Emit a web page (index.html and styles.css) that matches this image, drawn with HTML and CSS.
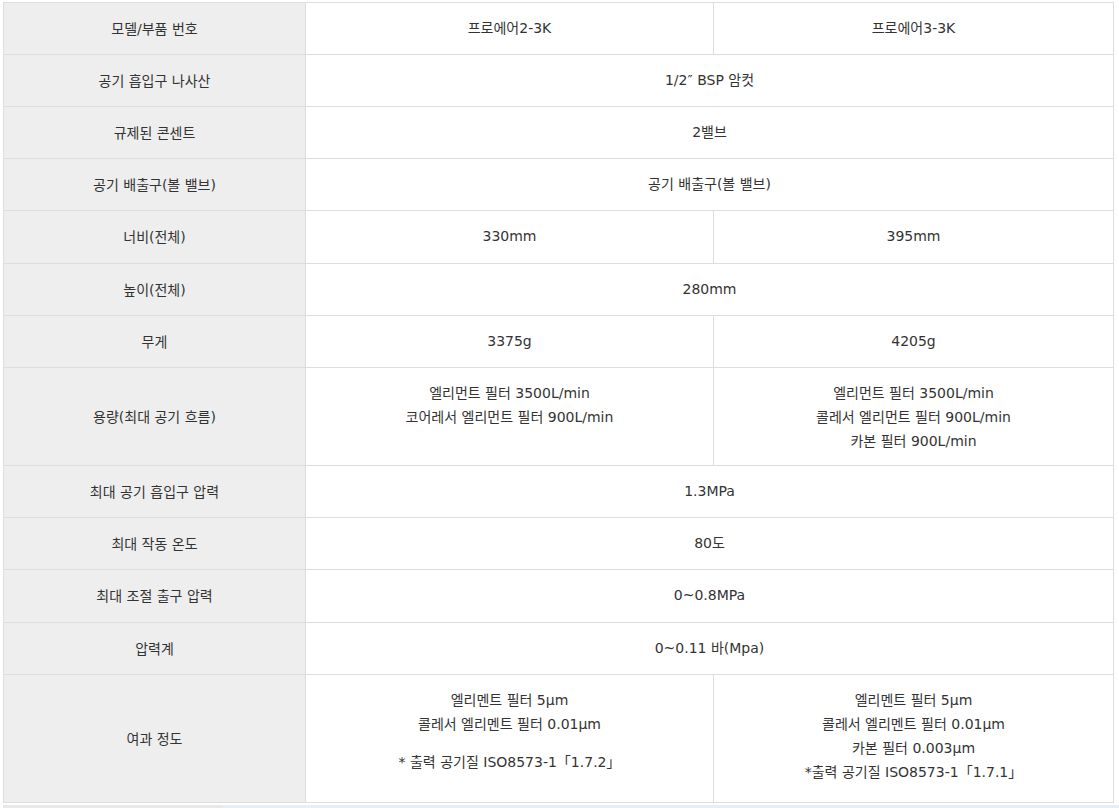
FILE: index.html
```html
<!DOCTYPE html>
<html lang="ko">
<head>
<meta charset="utf-8">
<title>사양</title>
<link rel="stylesheet" href="styles.css">
</head>
<body>
<table class="spec">
  <colgroup>
    <col class="c-label">
    <col class="c-a">
    <col class="c-b">
  </colgroup>
  <tbody>
    <tr><th>모델/부품 번호</th><td>프로에어2-3K</td><td>프로에어3-3K</td></tr>
    <tr><th>공기 흡입구 나사산</th><td colspan="2">1/2″ BSP 암컷</td></tr>
    <tr><th>규제된 콘센트</th><td colspan="2">2밸브</td></tr>
    <tr><th>공기 배출구(볼 밸브)</th><td colspan="2">공기 배출구(볼 밸브)</td></tr>
    <tr class="r-tall"><th>너비(전체)</th><td>330mm</td><td>395mm</td></tr>
    <tr><th>높이(전체)</th><td colspan="2">280mm</td></tr>
    <tr><th>무게</th><td>3375g</td><td>4205g</td></tr>
    <tr class="r-cap"><th>용량(최대 공기 흐름)</th><td>엘리먼트 필터 3500L/min<br>코어레서 엘리먼트 필터 900L/min</td><td>엘리먼트 필터 3500L/min<br>콜레서 엘리먼트 필터 900L/min<br>카본 필터 900L/min</td></tr>
    <tr><th>최대 공기 흡입구 압력</th><td colspan="2">1.3MPa</td></tr>
    <tr><th>최대 작동 온도</th><td colspan="2">80도</td></tr>
    <tr class="r-tall"><th>최대 조절 출구 압력</th><td colspan="2">0~0.8MPa</td></tr>
    <tr><th>압력계</th><td colspan="2">0~0.11 바(Mpa)</td></tr>
    <tr class="r-filt"><th>여과 정도</th><td>엘리멘트 필터 5μm<br>콜레서 엘리멘트 필터 0.01μm<p class="note">* 출력 공기질 ISO8573-1「1.7.2」</p></td><td>엘리멘트 필터 5μm<br>콜레서 엘리멘트 필터 0.01μm<br>카본 필터 0.003μm<br>*출력 공기질 ISO8573-1「1.7.1」</td></tr>
  </tbody>
</table>
<div class="strip"><span class="strip-a"></span><span class="strip-b"></span></div>
</body>
</html>
```

FILE: styles.css
```css
html, body {
  margin: 0;
  padding: 0;
  background: #ffffff;
}
body {
  padding: 2px 0 0 3px;
  font-family: "DejaVu Sans", "Noto Sans CJK KR", sans-serif;
  font-size: 14px;
  color: #333333;
}
.spec {
  border-collapse: collapse;
  table-layout: fixed;
  width: 1110px;
}
.c-label { width: 302px; }
.c-a { width: 408px; }
.c-b { width: 400px; }
.spec th,
.spec td {
  border: 1px solid #dddddd;
  text-align: center;
  line-height: 24px;
  padding: 0 10px;
  height: 52px;
  box-sizing: border-box;
}
.spec th {
  background: #eeeeee;
  font-weight: normal;
  vertical-align: middle;
}
.spec td {
  vertical-align: top;
  padding-top: 13px;
}
.r-tall th, .r-tall td { height: 53px; }
.r-cap th, .r-cap td { height: 98px; }
.r-filt th, .r-filt td { height: 128px; }
.note {
  margin: 14px 0 0;
}
.strip {
  display: flex;
  height: 4px;
  margin-top: 2px;
}
.strip-a { width: 220px; background: #e8e8e8; }
.strip-b { flex: 1; background: #e6eff5; }
```
